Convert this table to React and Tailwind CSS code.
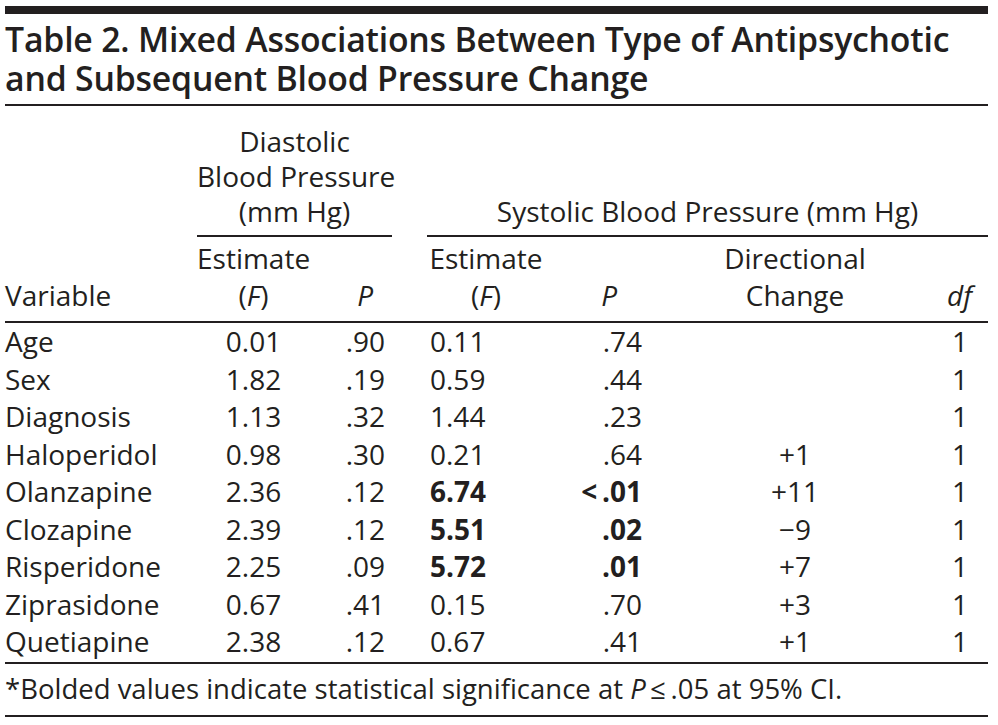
import React from 'react';

const rows = [
    { name: 'Age', dEst: '0.01', dP: '.90', sEst: '0.11', sP: '.74', dir: '', df: '1' },
    { name: 'Sex', dEst: '1.82', dP: '.19', sEst: '0.59', sP: '.44', dir: '', df: '1' },
    { name: 'Diagnosis', dEst: '1.13', dP: '.32', sEst: '1.44', sP: '.23', dir: '', df: '1' },
    { name: 'Haloperidol', dEst: '0.98', dP: '.30', sEst: '0.21', sP: '.64', dir: '+1', df: '1' },
    { name: 'Olanzapine', dEst: '2.36', dP: '.12', sEst: '6.74', sP: '<\u2009.01', dir: '+11', df: '1', bold: true },
    { name: 'Clozapine', dEst: '2.39', dP: '.12', sEst: '5.51', sP: '.02', dir: '\u22129', df: '1', bold: true },
    { name: 'Risperidone', dEst: '2.25', dP: '.09', sEst: '5.72', sP: '.01', dir: '+7', df: '1', bold: true },
    { name: 'Ziprasidone', dEst: '0.67', dP: '.41', sEst: '0.15', sP: '.70', dir: '+3', df: '1' },
    { name: 'Quetiapine', dEst: '2.38', dP: '.12', sEst: '0.67', sP: '.41', dir: '+1', df: '1' },
];

const cols = 'grid grid-cols-[192px_113px_82px_35px_118px_115px_270px_58px]';

export default function App() {
    return (
        <div className="min-h-screen bg-white pt-[6px] pl-[5px] text-[#231f20] font-['Open_Sans',sans-serif]">
            <div className="w-[983px]">
                {/* Top bar */}
                <div className="h-[8px] bg-[#231f20]" />

                {/* Title */}
                <h1 className="mt-[6px] text-[33.8px] leading-[39px] font-semibold tracking-[-0.2px] whitespace-nowrap">
                    Table 2. Mixed Associations Between Type of Antipsychotic
                    <br />
                    and Subsequent Blood Pressure Change
                </h1>
                <div className="mt-[6px] h-[2px] bg-[#231f20]" />

                {/* Group headers */}
                <div className={`${cols} items-end pt-[18px] text-[28px] leading-[35px] whitespace-nowrap`}>
                    <div className="col-start-2 col-span-2 text-center border-b-2 border-[#231f20] pb-[6px]">
                        Diastolic
                        <br />
                        Blood Pressure
                        <br />
                        (mm Hg)
                    </div>
                    <div className="col-start-5 col-span-4 text-center border-b-2 border-[#231f20] pb-[6px]">
                        Systolic Blood Pressure (mm Hg)
                    </div>
                </div>

                {/* Column headers */}
                <div className={`${cols} items-end text-[28px] leading-[37px] pt-[3px] pb-[7px] border-b-2 border-[#231f20] whitespace-nowrap`}>
                    <div>Variable</div>
                    <div className="text-center">
                        Estimate
                        <br />
                        (<i>F</i>)
                    </div>
                    <div className="text-right pr-[19px]"><i>P</i></div>
                    <div />
                    <div className="text-center">
                        Estimate
                        <br />
                        (<i>F</i>)
                    </div>
                    <div className="text-right pr-[43px]"><i>P</i></div>
                    <div className="text-center">
                        Directional
                        <br />
                        Change
                    </div>
                    <div className="text-right pr-[16px]"><i>df</i></div>
                </div>

                {/* Body */}
                <div className="text-[28px] leading-[37.5px] whitespace-nowrap">
                    {rows.map((r) => (
                        <div key={r.name} className={`${cols} h-[37.5px]`}>
                            <div>{r.name}</div>
                            <div className="text-center">{r.dEst}</div>
                            <div className="text-right pr-[7px]">{r.dP}</div>
                            <div />
                            <div className={`pl-[3px] ${r.bold ? 'font-bold' : ''}`}>{r.sEst}</div>
                            <div className={`text-right pr-[18px] ${r.bold ? 'font-bold' : ''}`}>{r.sP}</div>
                            <div className="text-center">{r.dir}</div>
                            <div className="text-right pr-[20px]">{r.df}</div>
                        </div>
                    ))}
                </div>
                <div className="mt-[1.5px] h-[2px] bg-[#231f20]" />

                {/* Footnote */}
                <p className="mt-[5.5px] text-[27.5px] leading-[37px] whitespace-nowrap">
                    *Bolded values indicate statistical significance at <i>P</i>{'\u2009\u2264\u2009'}.05 at 95% CI.
                </p>
                <div className="mt-[8.5px] h-[2px] bg-[#231f20]" />
            </div>
        </div>
    );
}
